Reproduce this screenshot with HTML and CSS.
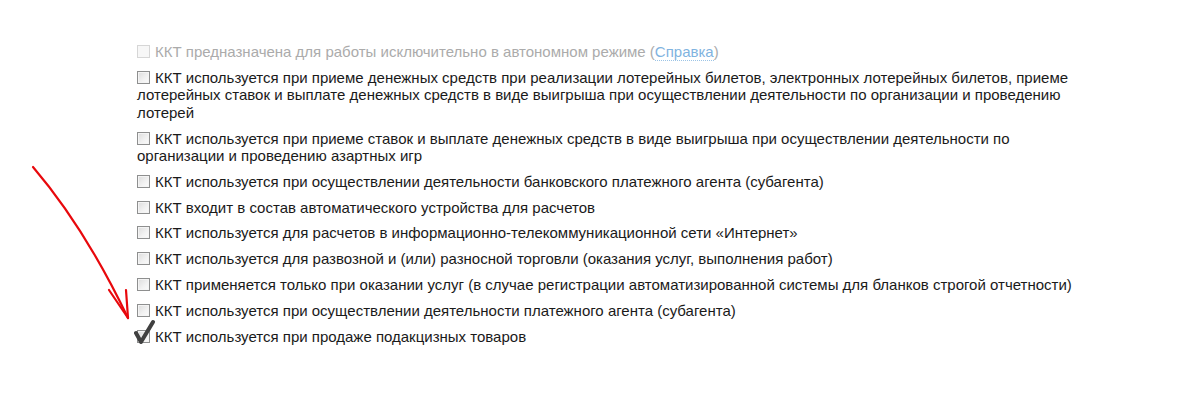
FILE: index.html
```html
<!DOCTYPE html>
<html lang="ru">
<head>
    <meta charset="UTF-8">
    <title>Признаки ККТ</title>
    <link rel="stylesheet" href="styles.css">
</head>
<body>
<div class="page">
    <svg class="arrow" width="200" height="360" viewBox="0 0 200 360">
        <path d="M33 167 Q85 228 128 318" fill="none" stroke="#e8080c" stroke-width="2.2" stroke-linecap="round"/>
        <path d="M109 290 L128 318 L126 290" fill="none" stroke="#e8080c" stroke-width="2.2" stroke-linecap="round" stroke-linejoin="round"/>
    </svg>

    <div class="options">
        <label class="opt disabled"><span class="box"></span>ККТ предназначена для работы исключительно в автономном режиме (<a href="#" class="help">Справка</a>)</label>
        <label class="opt"><span class="box"></span>ККТ используется при приеме денежных средств при реализации лотерейных билетов, электронных лотерейных билетов, приеме лотерейных ставок и выплате денежных средств в виде выигрыша при осуществлении деятельности по организации и проведению лотерей</label>
        <label class="opt"><span class="box"></span>ККТ используется при приеме ставок и выплате денежных средств в виде выигрыша при осуществлении деятельности по организации и проведению азартных игр</label>
        <label class="opt"><span class="box"></span>ККТ используется при осуществлении деятельности банковского платежного агента (субагента)</label>
        <label class="opt"><span class="box"></span>ККТ входит в состав автоматического устройства для расчетов</label>
        <label class="opt"><span class="box"></span>ККТ используется для расчетов в информационно-телекоммуникационной сети «Интернет»</label>
        <label class="opt"><span class="box"></span>ККТ используется для развозной и (или) разносной торговли (оказания услуг, выполнения работ)</label>
        <label class="opt"><span class="box"></span>ККТ применяется только при оказании услуг (в случае регистрации автоматизированной системы для бланков строгой отчетности)</label>
        <label class="opt"><span class="box"></span>ККТ используется при осуществлении деятельности платежного агента (субагента)</label>
        <label class="opt checked"><span class="box"><svg class="tick" width="22" height="26" viewBox="0 0 22 26"><path d="M2 14 L7 23 L19 3" fill="none" stroke="#404040" stroke-width="4" stroke-linecap="round" stroke-linejoin="round"/></svg></span>ККТ используется при продаже подакцизных товаров</label>
    </div>
</div>
</body>
</html>
```

FILE: styles.css
```css
* {
    margin: 0;
    padding: 0;
    box-sizing: border-box;
}

body {
    background: #fff;
    color: #1a1a1a;
    font-family: 'Liberation Sans', Arial, sans-serif;
    font-size: 15px;
    line-height: 17.5px;
}

.page {
    position: relative;
    height: 411px;
    padding: 43px 0 0 137px;
}

.arrow {
    position: absolute;
    top: 0;
    left: 0;
}

.options {
    width: 950px;
}

.opt {
    display: block;
    margin-bottom: 8.3px;
    cursor: default;
}

.box {
    display: inline-block;
    position: relative;
    width: 13px;
    height: 13px;
    margin-right: 5px;
    vertical-align: -1px;
    border: 1px solid #8e8f8f;
    background: linear-gradient(135deg, #dcdcdc 0%, #f2f2f2 60%, #fbfbfb 100%);
    box-shadow: inset 0 0 0 1px #f4f4f4;
}

.disabled {
    color: #ababab;
}

.disabled .box {
    border-color: #d6d6d6;
    background: #f7f7f7;
    box-shadow: none;
}

.help {
    color: #7fb3e0;
    text-decoration: none;
    border-bottom: 1px dotted #9cc4e6;
}

.tick {
    position: absolute;
    left: -4px;
    top: -12px;
}
```
